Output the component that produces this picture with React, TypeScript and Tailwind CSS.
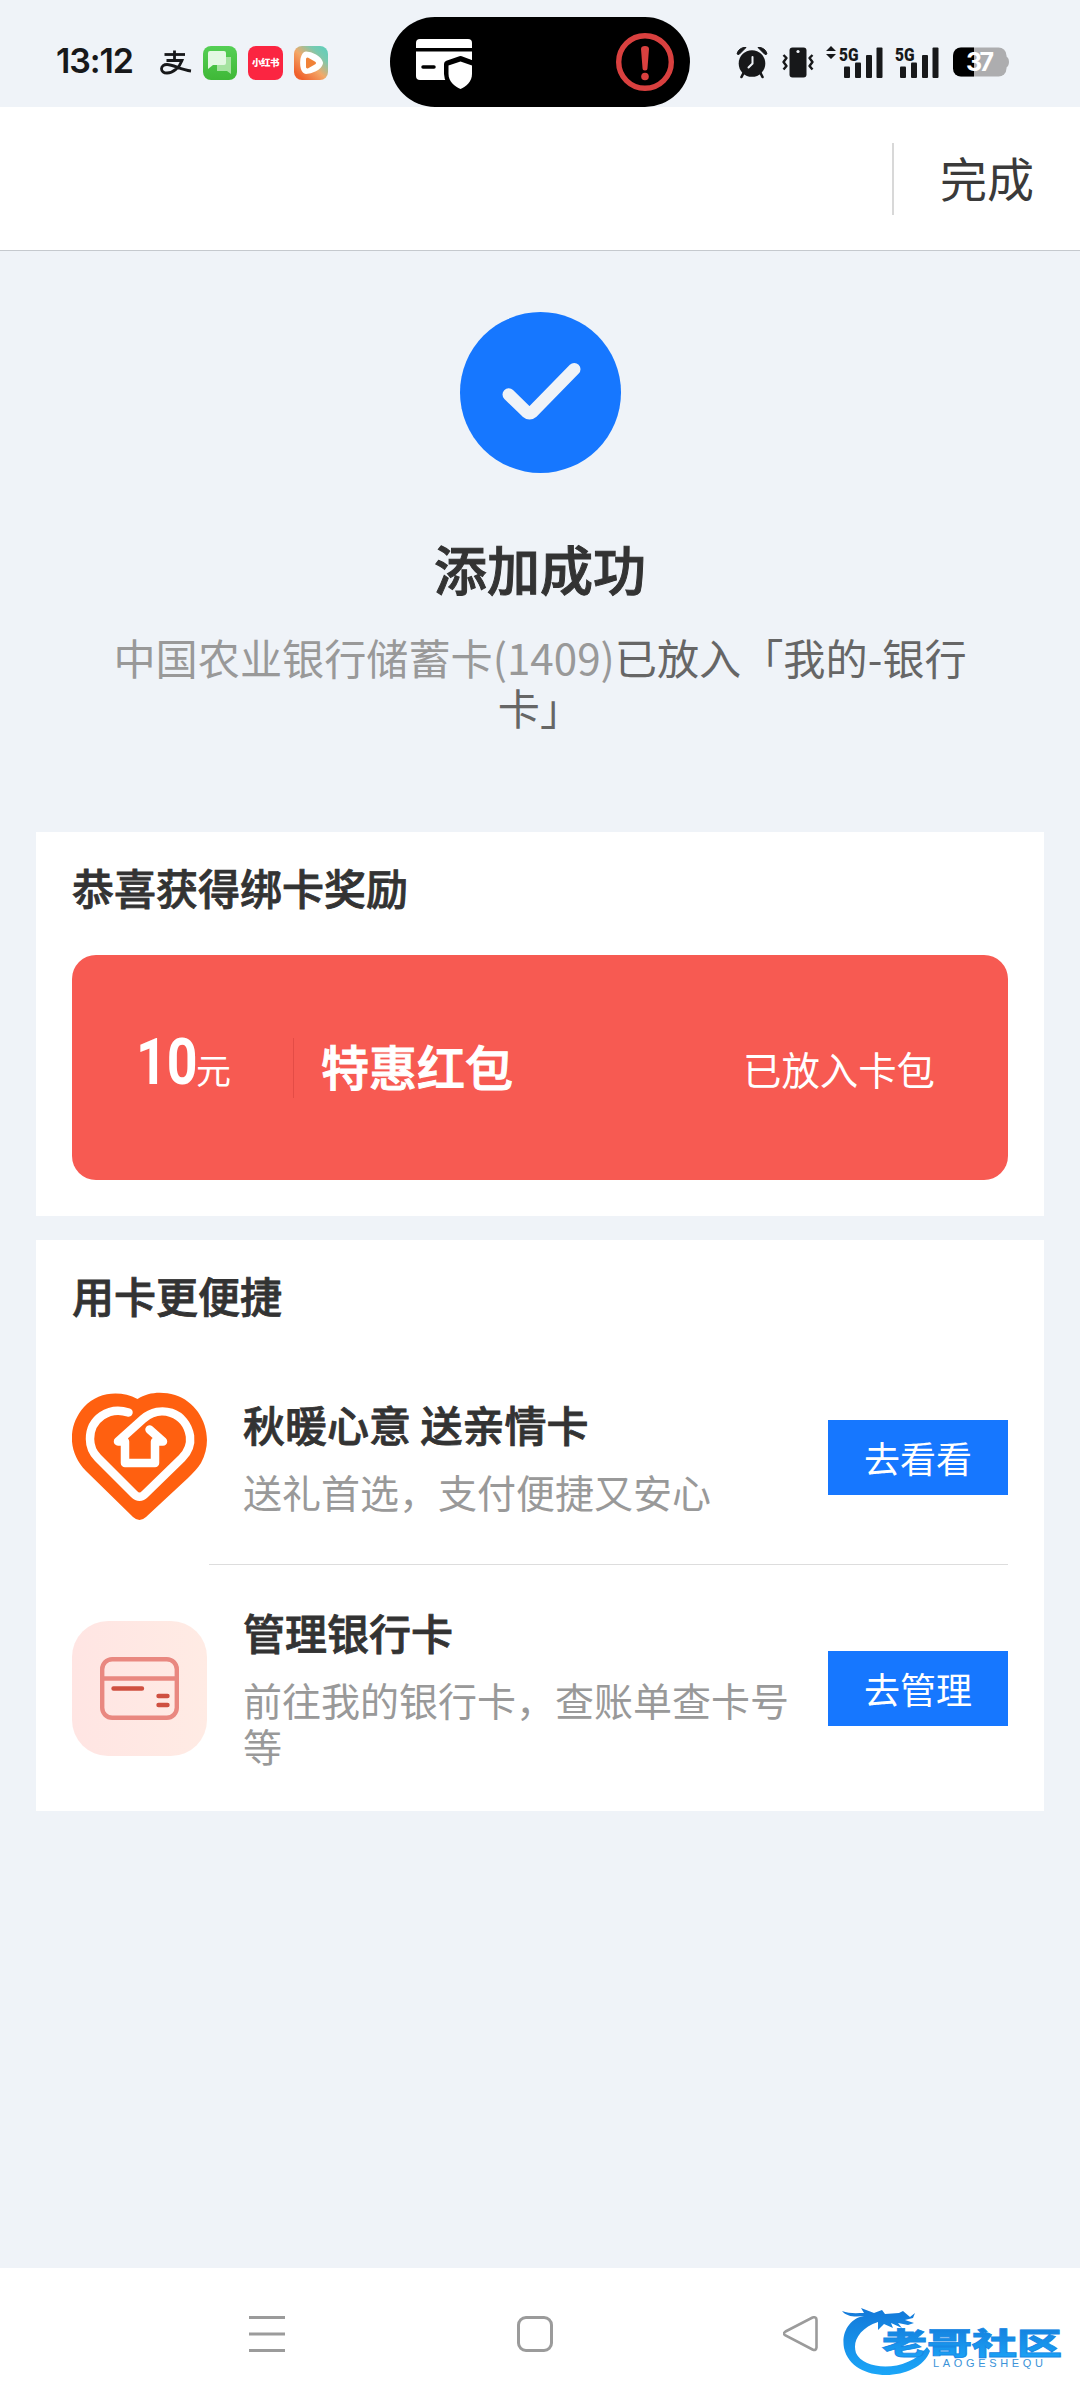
import type { ReactNode } from "react";

function AlipayIcon() {
  return (
    <svg width="32" height="26" viewBox="0 0 32 26" fill="none" stroke="#17181a" strokeWidth="2.800">
      <path d="M4.500 4.500H25" />
      <path d="M14.500 0.500V10.500" />
      <path d="M6.500 10.500H22C19.500 17.500 13 23 7 23C3.500 23 1.500 21.200 1.500 18.800C1.500 16.200 4 14.500 7 14.500C13.500 14.500 20 19.500 31 21" />
    </svg>
  );
}

function MessagesIcon() {
  return (
    <svg width="34" height="34" viewBox="0 0 34 34">
      <defs>
        <linearGradient id="msg" x1="0" y1="0" x2="0" y2="1">
          <stop offset="0" stopColor="#55cf55" />
          <stop offset="1" stopColor="#3fb837" />
        </linearGradient>
      </defs>
      <rect width="34" height="34" rx="8" fill="url(#msg)" />
      <path d="M14 11H28V28L24 25H14Z" fill="#a5e3a0" />
      <path d="M7 5H21A2 2 0 0 1 23 7V17A2 2 0 0 1 21 19H10L5 23V7A2 2 0 0 1 7 5Z" fill="#e3f8e2" />
    </svg>
  );
}

function VideoIcon() {
  return (
    <svg width="34" height="34" viewBox="0 0 34 34">
      <defs>
        <linearGradient id="vid" x1="0.15" y1="0.9" x2="0.9" y2="0.1">
          <stop offset="0" stopColor="#f0602c" />
          <stop offset="0.45" stopColor="#f3a868" />
          <stop offset="0.8" stopColor="#7cc9ae" />
          <stop offset="1" stopColor="#66cdb8" />
        </linearGradient>
      </defs>
      <rect width="34" height="34" rx="8" fill="url(#vid)" />
      <path d="M12 9.500C17 9.500 24 13.500 25 17C24 20.500 17 24 12 24C9.500 21 9.500 13 12 9.500Z" fill="#fff" stroke="#fff" strokeWidth="8" strokeLinejoin="round" />
      <path d="M13.500 13L20.500 17L13.500 21Z" fill="#f08238" stroke="#f08238" strokeWidth="3" strokeLinejoin="round" />
    </svg>
  );
}

function SafeCardIcon() {
  return (
    <svg width="58" height="52" viewBox="0 0 58 52">
      <path d="M4 0H52Q56 0 56 4V9H0V4Q0 0 4 0Z" fill="#fff" />
      <path d="M0 12.500H56V41H4Q0 41 0 37Z" fill="#fff" />
      <path d="M7 28H18" stroke="#000" strokeWidth="3.500" strokeLinecap="round" />
      <path d="M44.500 20.500L56.500 25V35C56.500 43 50 47.500 44.500 50C39 47.500 31.500 43 31.500 35V25Z" fill="#fff" stroke="#000" strokeWidth="7" strokeLinejoin="round" />
      <path d="M44.500 22.500L56 26.500V35C56 43 50 47.500 44.500 50C39 47.500 32.500 43 32.500 35V26.500Z" fill="#fff" />
    </svg>
  );
}

function WarningIcon() {
  return (
    <svg width="58" height="58" viewBox="0 0 58 58">
      <circle cx="29" cy="29" r="26.300" fill="none" stroke="#d9403f" strokeWidth="5.400" />
      <path d="M25 16A4 3 0 0 1 33 16L31.500 35A2.500 2.500 0 0 1 26.500 35Z" fill="#d9403f" />
      <circle cx="29" cy="43.500" r="3.800" fill="#d9403f" />
    </svg>
  );
}

function AlarmIcon() {
  return (
    <svg width="32" height="33" viewBox="0 0 32 33">
      <path d="M8 26L5.500 31M24 26L26.500 31" stroke="#17181a" strokeWidth="2.600" strokeLinecap="round" />
      <circle cx="16" cy="17.500" r="13.300" fill="#17181a" />
      <path d="M1 8A8 8 0 0 1 10 1.500L3 8.500ZM31 8A8 8 0 0 0 22 1.500L29 8.500Z" fill="#17181a" stroke="#17181a" strokeLinejoin="round" />
      <path d="M16.500 11V17.500L12.500 21.500" stroke="#eff3f8" strokeWidth="2" fill="none" strokeLinecap="round" />
    </svg>
  );
}

function VibrateIcon() {
  return (
    <svg width="32" height="31" viewBox="0 0 32 31" fill="none">
      <rect x="7.500" y="0.500" width="17" height="30" rx="3" fill="#17181a" />
      <circle cx="16" cy="4.500" r="1.600" fill="#eff3f8" />
      <path d="M1.500 8L4.500 11L1.500 15L4.500 19L1.500 22.500M30.500 8L27.500 11L30.500 15L27.500 19L30.500 22.500" stroke="#17181a" strokeWidth="2.400" strokeLinejoin="round" />
    </svg>
  );
}

function SignalIcon() {
  return (
    <svg width="44" height="39" viewBox="0 -6 44 39" fill="#17181a">
      <text x="0" y="14.500" textLength="19.500" lengthAdjust="spacingAndGlyphs" fontSize="19" className="font-['Roboto'] font-black">5G</text>
      <rect x="5" y="20.500" width="6" height="11.500" rx="1" />
      <rect x="16" y="16.500" width="6" height="15.500" rx="1" />
      <rect x="27" y="9" width="6" height="23" rx="1" />
      <rect x="37.500" y="1.500" width="6" height="30.500" rx="1" />
    </svg>
  );
}

function BatteryIcon() {
  return (
    <svg width="56" height="30" viewBox="0 0 56 30">
      <defs>
        <clipPath id="level">
          <rect width="21" height="30" />
        </clipPath>
      </defs>
      <rect x="0" y="0.500" width="53.500" height="29" rx="8" fill="#adadaf" />
      <path d="M52 9Q56 10 56 15T52 21Z" fill="#adadaf" />
      <rect x="0" y="0.500" width="53.500" height="29" rx="8" fill="#000" clipPath="url(#level)" />
      <text x="13" y="24" textLength="28" fontSize="25" fill="#fff" className="font-['Inter'] font-bold">37</text>
    </svg>
  );
}

function StatusBar() {
  return (
    <div className="flex h-[107px] items-start">
      <div className="ml-[56px] mt-[38px] w-[104px] whitespace-nowrap font-['Inter'] text-[34px] leading-[46px] font-semibold tracking-[-1.1px] text-[#17181a]">
        13:12
      </div>
      <div className="mt-[46px] flex items-center">
        <AlipayIcon />
        <div className="ml-[11px]"><MessagesIcon /></div>
        <div className="ml-[11px] flex h-[34px] w-[35px] items-center justify-center rounded-[8px] bg-[#fb2541]">
          <span className="whitespace-nowrap text-[9.5px] leading-none font-black tracking-[-0.5px] text-white">小红书</span>
        </div>
        <div className="ml-[11px]"><VideoIcon /></div>
      </div>
      <div className="ml-[62px] mt-[17px] flex h-[90px] w-[300px] items-center justify-between rounded-full bg-black pl-[26px] pr-[16px]">
        <div className="pt-[6px]"><SafeCardIcon /></div>
        <WarningIcon />
      </div>
      <div className="ml-[46px] mt-[40px] flex items-start">
        <div className="mt-[6px]"><AlarmIcon /></div>
        <div className="ml-[14px] mt-[7px]"><VibrateIcon /></div>
        <svg className="ml-[12px] mt-[6px]" width="10" height="14" viewBox="0 0 10 14" fill="#17181a">
          <path d="M5 0L10 5H0ZM5 13L0 8H10Z" />
        </svg>
        <div className="ml-[3px]"><SignalIcon /></div>
        <div className="ml-[12px]"><SignalIcon /></div>
        <div className="ml-[14px] mt-[7px]"><BatteryIcon /></div>
      </div>
    </div>
  );
}

function FamilyHeartIcon() {
  return (
    <svg width="135" height="135" viewBox="0 0 135 135" fill="none">
      <path d="M65.500 9C76 2 90 1 103 5C129 13 144 46 129 73C126 78 121 83 116 88L74 127Q67.500 133 61 127L14 81C-4 63 -5 36 12 17C26 2 48 0 65.500 9Z" fill="#ff6010" />
      <path d="M56.500 22.500C37 16 18 29 18 49C18 57 20 62 26 68L62 104Q67.500 109.500 73 104L110 68C117 61 119 54 118 46C114 22 88 14 71 29L46 51.500H53V73H83V51.500H91L77.500 39.500" stroke="#fff" strokeWidth="8.500" strokeLinecap="round" strokeLinejoin="round" />
    </svg>
  );
}

function BankCardIcon() {
  return (
    <div className="flex size-[135px] items-center justify-center rounded-[36px] bg-linear-to-r from-[#ffe5e3] to-[#ffebe4]">
      <svg width="79" height="63" viewBox="0 0 79 63" fill="none">
        <rect x="2.200" y="2.200" width="74.600" height="58.600" rx="10" stroke="#e98880" strokeWidth="4.400" />
        <path d="M2 21.500H77" stroke="#e98880" strokeWidth="4.400" />
        <path d="M13.500 31.500H42M58.500 39H67.500M58.500 48H67.500" stroke="#cf5040" strokeWidth="4.400" strokeLinecap="round" />
      </svg>
    </div>
  );
}

type ServiceRowProps = {
  icon: ReactNode;
  title: string;
  desc: string;
  action: string;
};

function ServiceRow({ icon, title, desc, action }: ServiceRowProps) {
  return (
    <div className="flex h-full items-center">
      <div className="shrink-0">{icon}</div>
      <div className="ml-[36px] w-[552px] shrink-0 pb-[6px]">
        <h3 className="text-[42px] leading-[60px] font-medium text-[#333] [-webkit-text-stroke:0.8px]">{title}</h3>
        <p className="mt-[14px] text-[39px] leading-[46px] text-[#999]">{desc}</p>
      </div>
      <button className="ml-auto h-[75px] w-[180px] bg-[#1677ff] text-[36px] leading-[75px] text-white">
        {action}
      </button>
    </div>
  );
}

function Watermark() {
  return (
    <svg width="224" height="76" viewBox="0 0 224 76">
      <defs>
        <linearGradient id="wm" x1="0" y1="0" x2="0" y2="1">
          <stop offset="0" stopColor="#1378d8" />
          <stop offset="1" stopColor="#1ba6f8" />
        </linearGradient>
      </defs>
      <path d="M0 6C7 9 16 8 22 8L19 3L32 8L40 5L43 9L57 8L61 6L68 12L73 8L71 13L63 15L72 18L66 20L56 18L60 23L49 18L51 23L42 19L36 25L36 17C18 23 10 36 14 48C22 66 66 68 85 42L88 46C77 77 10 80 2 43C-1 26 9 13 22 11C13 12 5 12 0 6Z" fill="url(#wm)" />
      <text x="40" y="48.500" textLength="180" lengthAdjust="spacingAndGlyphs" fontSize="30" fill="url(#wm)" stroke="#1788e4" strokeWidth="0.800" className="font-['Noto_Sans_CJK_SC'] font-black">老哥社区</text>
      <text x="91" y="61.500" textLength="110" fontSize="11" fill="#3b93d8" className="font-['Liberation_Sans']">LAOGESHEQU</text>
    </svg>
  );
}

function NavigationBar() {
  return (
    <nav className="flex h-[132px] items-start bg-white">
      <svg className="ml-[249px] mt-[48px]" width="36" height="37" viewBox="0 0 36 37" stroke="#9b9b9b" strokeWidth="3">
        <path d="M0 1.500H36M0 18H36M0 34.500H36" />
      </svg>
      <div className="ml-[232px] mt-[48px] size-[36px] rounded-[9px] border-[3px] border-[#9b9b9b]" />
      <svg className="ml-[230px] mt-[48px]" width="36" height="37" viewBox="0 0 36 37" fill="none" stroke="#9b9b9b" strokeWidth="2.600">
        <path d="M2.500 15.500L29.500 1.500Q33.500 0.500 33.500 4V31.500Q33 35 29.500 33.500L2.500 19.500Q-0.500 17.500 2.500 15.500Z" />
      </svg>
      <div className="ml-[23px] mt-[37px]"><Watermark /></div>
    </nav>
  );
}

export default function App() {
  return (
    <div className="flex h-[2400px] w-[1080px] flex-col overflow-hidden bg-[#eff3f8] font-['Noto_Sans_CJK_SC',sans-serif]">
      <StatusBar />

      <header className="flex h-[144px] items-center justify-end border-b border-[#c5c9ce] bg-white">
        <div className="h-[72px] w-[2px] bg-[#d8d8d8]" />
        <button className="ml-[46px] mr-[46px] pb-[3px] text-[47px] leading-[60px] text-[#3a3a3a]">完成</button>
      </header>

      <section className="flex h-[581px] flex-col items-center pt-[61px]">
        <svg width="161" height="161" viewBox="0 0 162 162">
          <circle cx="81" cy="81" r="81" fill="#1677ff" />
          <path d="M49 83L67 100.500Q70 103 73 100.500L115 57.500" fill="none" stroke="#eff3f8" strokeWidth="12.500" strokeLinecap="round" strokeLinejoin="round" />
        </svg>
        <h1 className="mt-[60px] text-[53px] leading-[70px] font-medium text-[#333] [-webkit-text-stroke:1px]">添加成功</h1>
        <p className="mt-[29px] w-[868px] text-center text-[42.15px] leading-[50px] text-[#666]">
          <span className="text-[#999]">中国农业银行储蓄卡(1409)</span>已放入「我的-银行卡」
        </p>
      </section>

      <section className="mx-[36px] h-[384px] bg-white px-[36px] pt-[25px]">
        <h2 className="text-[42px] leading-[60px] font-medium text-[#333] [-webkit-text-stroke:0.8px]">恭喜获得绑卡奖励</h2>
        <div className="mt-[38px] flex h-[225px] items-center rounded-[24px] bg-[#f75a52] pl-[64px] pr-[73px] text-white">
          <div className="flex w-[157px] items-baseline pb-[3px]">
            <span className="w-[60px] font-['Roboto'] text-[64px] leading-[70px] font-bold">
              <span className="inline-block origin-left scale-x-[0.84]">10</span>
            </span>
            <span className="text-[35px] leading-[70px]">元</span>
          </div>
          <div className="h-[60px] w-px bg-[#e44c46]" />
          <span className="ml-[27px] pb-[5px] text-[48px] leading-[70px] font-medium [-webkit-text-stroke:1px]">特惠红包</span>
          <span className="ml-auto text-[38.4px] leading-[70px]">已放入卡包</span>
        </div>
      </section>

      <section className="mx-[36px] mt-[24px] h-[571px] bg-white px-[36px]">
        <h2 className="h-[110px] pt-[25px] text-[42px] leading-[60px] font-medium text-[#333] [-webkit-text-stroke:0.8px]">用卡更便捷</h2>
        <div className="h-[214px]">
          <ServiceRow icon={<FamilyHeartIcon />} title="秋暖心意 送亲情卡" desc="送礼首选，支付便捷又安心" action="去看看" />
        </div>
        <div className="ml-[137px] h-px bg-[#ddd]" />
        <div className="h-[246px]">
          <ServiceRow icon={<BankCardIcon />} title="管理银行卡" desc="前往我的银行卡，查账单查卡号等" action="去管理" />
        </div>
      </section>

      <div className="grow" />
      <NavigationBar />
    </div>
  );
}
